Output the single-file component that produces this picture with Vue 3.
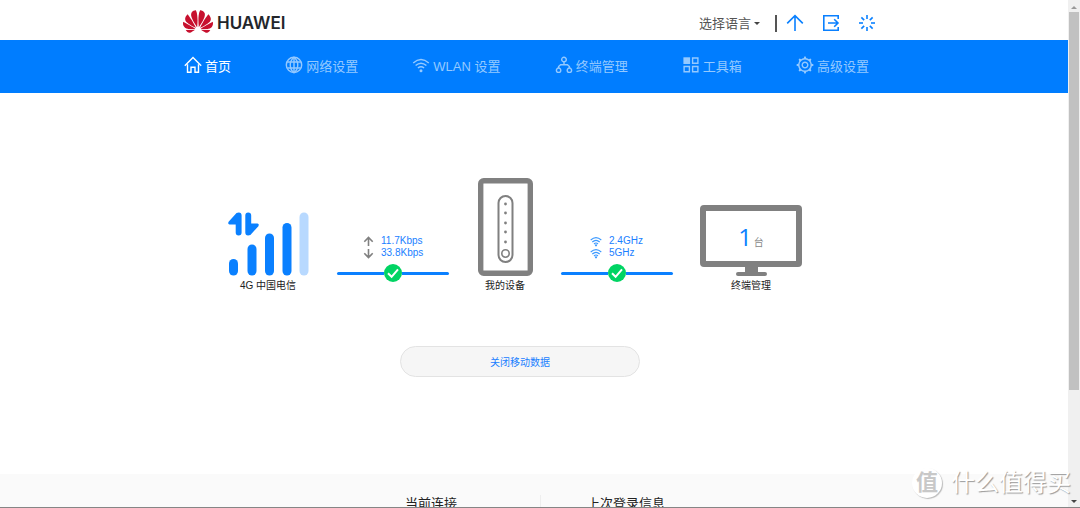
<script setup>
import { ref } from 'vue'

const language = ref('')

const navItems = [
  {
    label: '首页',
    active: true,
    paths: ['M.8 9.7L9 1.5L17.2 9.7', 'M3.5 8.2V16.3H7V11.2H11V16.3H14.5V8.2'],
  },
  {
    label: '网络设置',
    paths: [
      'M9 1.2a7.7 7.7 0 1 0 0 15.4a7.7 7.7 0 1 0 0-15.4z',
      'M9 1.2c-5 4-5 11.4 0 15.4c5-4 5-11.4 0-15.4z',
      'M2.2 6H15.8M2.2 12H15.8M9 1.2V16.6',
    ],
  },
  {
    label: 'WLAN 设置',
    paths: ['M1.2 7Q9 .2 16.8 7', 'M3.6 9.5Q9 4.8 14.4 9.5', 'M5.9 12Q9 9.4 12.1 12'],
    fills: ['M9 13.2a1.5 1.5 0 1 0 0 3a1.5 1.5 0 1 0 0-3z'],
  },
  {
    label: '终端管理',
    paths: [
      'M9 1.2a2.3 2.3 0 1 0 0 4.6a2.3 2.3 0 1 0 0-4.6z',
      'M3.6 12a2.2 2.2 0 1 0 0 4.4a2.2 2.2 0 1 0 0-4.4z',
      'M14.4 12a2.2 2.2 0 1 0 0 4.4a2.2 2.2 0 1 0 0-4.4z',
      'M9 6V8.8M3.6 12V10.6L5.6 8.8H12.4L14.4 10.6V12',
    ],
  },
  {
    label: '工具箱',
    paths: ['M10.6 2H15.9V7.3H10.6z', 'M2.1 10.5H7.4V15.8H2.1z', 'M10.6 10.5H15.9V15.8H10.6z'],
    fills: ['M1.4 1.3H8.1V8H1.4z'],
  },
  {
    label: '高级设置',
    paths: [
      'M9 2.8a6.2 6.2 0 1 0 0 12.4a6.2 6.2 0 1 0 0-12.4z',
      'M9 6.2a2.8 2.8 0 1 0 0 5.6a2.8 2.8 0 1 0 0-5.6z',
    ],
    fills: [
      'M7.5 3L8.3 .6H9.7L10.5 3zM7.5 15L8.3 17.4H9.7L10.5 15zM3 7.5L.6 8.3V9.7L3 10.5zM15 7.5L17.4 8.3V9.7L15 10.5zM3.6 5.7L2.6 3.6L3.6 2.6L5.7 3.6zM12.3 3.6L14.4 2.6L15.4 3.6L14.4 5.7zM3.6 12.3L2.6 14.4L3.6 15.4L5.7 14.4zM12.3 14.4L14.4 15.4L15.4 14.4L14.4 12.3z',
    ],
  },
]

const rays = [0, 45, 90, 135, 180, 225, 270, 315]
const lamps = [26, 35, 45, 54, 64]
const bands = ['2.4GHz', '5GHz']
const rates = [
  { value: '11.7Kbps', name: '上传', path: 'M5.5 10V2M1.3 5.7L5.5 1.5L9.7 5.7' },
  { value: '33.8Kbps', name: '下载', path: 'M5.5 1V9M1.3 5.3L5.5 9.5L9.7 5.3' },
]
</script>

<template>
  <div class="window">
    <div class="page">
      <header class="top">
        <div class="container top-row">
          <a class="brand" href="#">
            <svg class="flower" viewBox="0 2.9 24 18.2" aria-hidden="true">
              <path
                d="M3.67 6.14S1.82 7.91 1.72 9.78v.35c.08 1.51 1.22 2.4 1.22 2.4 1.83 1.79 6.26 4.04 7.3 4.55 0 0 .06.03.1-.01l.02-.04v-.04C7.52 10.8 3.67 6.14 3.67 6.14zM9.65 18.6c-.02-.08-.1-.08-.1-.08l-7.38.26c.8 1.43 2.15 2.53 3.56 2.2.96-.25 3.16-1.78 3.88-2.3.06-.05.04-.09.04-.09zm.08-.78C6.49 15.63.21 12.28.21 12.28c-.15.46-.2.9-.21 1.3v.07c0 1.07.4 1.82.4 1.82.8 1.69 2.34 2.2 2.34 2.2.7.3 1.4.31 1.4.31.12.02 4.4 0 5.54 0 .05 0 .08-.05.08-.05v-.06c0-.03-.03-.05-.03-.05zM9.06 3.19a3.42 3.42 0 00-2.57 3.15v.41c.03.6.16 1.05.16 1.05.66 2.9 3.86 7.65 4.55 8.65.05.05.1.03.1.03a.1.1 0 00.06-.1c1.06-10.6-1.11-13.42-1.11-13.42-.32.02-1.19.23-1.19.23zm8.299 2.27s-.49-1.8-2.44-2.28c0 0-.57-.14-1.17-.22 0 0-2.18 2.81-1.12 13.43.01.07.06.08.06.08.07.03.1-.03.1-.03.72-1.03 3.9-5.76 4.55-8.64 0 0 .36-1.4.02-2.34zm-2.92 13.07s-.07 0-.09.05c0 0-.01.07.03.1.7.51 2.85 2 3.88 2.3 0 0 .16.05.43.06h.14c.69-.02 1.9-.37 3-2.26l-7.4-.25zm7.83-8.41c.14-2.06-1.94-3.97-1.94-3.98 0 0-3.85 4.66-6.67 10.8 0 0-.03.08.02.13l.04.01h.06c1.06-.53 5.46-2.77 7.28-4.54 0 0 1.15-.93 1.21-2.42zm1.52 2.14s-6.28 3.37-9.52 5.55c0 0-.05.04-.03.11 0 0 .03.06.07.06 1.16 0 5.56 0 5.67-.02 0 0 .57-.02 1.27-.29 0 0 1.56-.5 2.37-2.27 0 0 .73-1.45.17-3.14z"
              />
            </svg>
            <span>HUAWEI</span>
          </a>
          <div class="tools">
            <label class="language">
              <select v-model="language" aria-label="选择语言">
                <option value="">选择语言</option>
              </select>
              <i class="caret"></i>
            </label>
            <i class="bar"></i>
            <button class="tool" type="button" aria-label="升级">
              <svg viewBox="0 0 18 18"><path d="M9 17V1.8M1.2 9.4L9 1.6L16.8 9.4" /></svg>
            </button>
            <button class="tool" type="button" aria-label="退出">
              <svg viewBox="0 0 18 18">
                <path d="M16.2 5V1.8H1.8V16.2H16.2V13M6 9H16M12.2 5.2L16 9L12.2 12.8" />
              </svg>
            </button>
            <button class="tool" type="button" aria-label="重启">
              <svg viewBox="0 0 18 18">
                <path v-for="r in rays" :key="r" d="M9 1V5" :transform="`rotate(${r} 9 9)`" />
              </svg>
            </button>
          </div>
        </div>
      </header>

      <nav class="nav">
        <div class="container nav-row">
          <a v-for="item in navItems" :key="item.label" href="#" :class="{ active: item.active }">
            <svg viewBox="0 0 18 18" aria-hidden="true">
              <path v-for="p in item.paths" :key="p" class="stroke" :d="p" />
              <path v-for="p in item.fills" :key="p" class="fill" :d="p" />
            </svg>
            <span>{{ item.label }}</span>
          </a>
        </div>
      </nav>

      <main class="container main">
        <section class="diagram">
          <div class="node">
            <svg class="signal" viewBox="0 0 81 64" aria-hidden="true">
              <rect x="1" y="47" width="9" height="16.5" rx="4.5" />
              <rect x="19.5" y="32.5" width="9" height="31" rx="4.5" />
              <rect x="37" y="21.5" width="9" height="42" rx="4.5" />
              <rect x="54.5" y="11" width="9" height="52.5" rx="4.5" />
              <rect class="off" x="71.5" y="0.5" width="9" height="63" rx="4.5" />
              <path
                d="M8.5.9Q13.6-.5 13.6 3.5V20.5Q13.6 23.5 10.6 23.500Q7.700 23.500 7.700 20.500V12.500H1.500Q-.5 12 .6 9.800z"
              />
              <path
                d="M17.3 3.5Q17.3.5 20.2.5Q23.2.5 23.2 3.5V11.500H29.500Q31.500 12 30.400 14.200L22.400 23.100Q17.300 24.500 17.300 20.500z"
              />
            </svg>
            <span class="caption">4G 中国电信</span>
          </div>

          <div class="link">
            <ul class="rates">
              <li v-for="rate in rates" :key="rate.name">
                <svg viewBox="0 0 11 11" role="img" :aria-label="rate.name"><path :d="rate.path" /></svg>
                <span>{{ rate.value }}</span>
              </li>
            </ul>
            <div class="wire">
              <svg viewBox="0 0 18 18"><circle cx="9" cy="9" r="9" /><path d="M4 9.3L7.6 12.8L14 5.4" /></svg>
            </div>
          </div>

          <div class="node">
            <svg class="router" viewBox="0 0 55 98" aria-hidden="true">
              <rect x="2.7" y="2.7" width="49.6" height="92.6" rx="3" stroke-width="5.4" />
              <rect x="20.5" y="18" width="14" height="66" rx="7" stroke-width="2" />
              <circle cx="27.5" cy="75.5" r="3.7" stroke-width="1.6" />
              <circle v-for="y in lamps" :key="y" class="lamp" cx="27.5" :cy="y" r="1.4" />
            </svg>
            <span class="caption">我的设备</span>
          </div>

          <div class="link">
            <ul class="bands">
              <li v-for="band in bands" :key="band">
                <svg viewBox="0 0 12 11" aria-hidden="true">
                  <path d="M.7 4Q6 -.7 11.3 4M2.3 6Q6 2.6 9.7 6M4 8Q6 6 8 8" />
                  <circle cx="6" cy="9.3" r="1.1" />
                </svg>
                <span>{{ band }}</span>
              </li>
            </ul>
            <div class="wire">
              <svg viewBox="0 0 18 18"><circle cx="9" cy="9" r="9" /><path d="M4 9.3L7.6 12.8L14 5.4" /></svg>
            </div>
          </div>

          <div class="node">
            <div class="monitor">
              <div class="screen"><strong>1</strong><small>台</small></div>
              <i class="neck"></i>
              <i class="foot"></i>
            </div>
            <span class="caption">终端管理</span>
          </div>
        </section>

        <button class="toggle" type="button">关闭移动数据</button>
      </main>

      <footer class="info">
        <div class="container info-row">
          <h2>当前连接</h2>
          <h2>上次登录信息</h2>
        </div>
      </footer>
    </div>

    <div class="scrollbar" aria-hidden="true">
      <i class="up"></i>
      <i class="thumb"></i>
      <i class="down"></i>
    </div>

    <div class="watermark">
      <b>值</b>
      <span>什么值得买</span>
    </div>
  </div>
</template>

<style>
body {
  margin: 0;
}
</style>

<style scoped>
* {
  box-sizing: border-box;
}
.window {
  position: relative;
  display: grid;
  grid-template-columns: minmax(0, 1fr) 12px;
  height: 100vh;
  overflow: hidden;
  border-bottom: 1px solid #858585;
  background: #fff;
  color: #333;
  font-family: "Liberation Sans", "Noto Sans CJK SC", sans-serif;
  font-size: 13px;
}
.page {
  min-height: 0;
  overflow: hidden;
}
.container {
  max-width: 702px;
  margin: 0 auto;
}
a {
  text-decoration: none;
}
svg {
  display: block;
  flex: none;
}

.top-row {
  display: flex;
  align-items: center;
  justify-content: space-between;
  height: 40px;
  padding: 6px 9px 0 0;
}
.brand {
  display: flex;
  align-items: center;
  gap: 4px;
  padding-bottom: 4px;
  color: #23262b;
  font: 600 17px/24px Inter, sans-serif;
}
.brand span {
  padding-top: 4px;
}
.flower {
  width: 30px;
  height: 23px;
  fill: #c7102e;
}
.tools {
  display: flex;
  align-items: center;
}
.language {
  display: flex;
  align-items: center;
  gap: 2px;
}
.language select {
  appearance: none;
  padding: 2px 0 0;
  border: 0;
  background: none;
  color: #555;
  font: inherit;
  line-height: 20px;
}
.caret {
  border: 3px solid transparent;
  border-top-color: #444;
  border-bottom: 0;
}
.bar {
  width: 2px;
  height: 17px;
  margin: 0 9px 0 15px;
  background: #555;
}
.tool {
  width: 18px;
  height: 18px;
  padding: 0;
  border: 0;
  background: none;
}
.tool + .tool {
  margin-left: 18px;
}
.tool svg {
  width: 18px;
  height: 18px;
  fill: none;
  stroke: #0a80ff;
  stroke-width: 1.6;
}

.nav {
  background: #007dff;
}
.nav-row {
  display: flex;
  justify-content: space-between;
  height: 53px;
  padding: 0 16px 3px 1px;
}
.nav a {
  display: flex;
  align-items: center;
  gap: 3px;
  color: #94c9ff;
  white-space: nowrap;
}
.nav a.active {
  color: #fff;
}
.nav svg {
  width: 18px;
  height: 18px;
}
.stroke {
  fill: none;
  stroke: currentColor;
  stroke-width: 1.4;
}
.fill {
  fill: currentColor;
}

.main {
  display: flex;
  flex-direction: column;
  align-items: center;
  height: 381px;
  padding: 85px 28px 0 0;
}
.diagram {
  display: grid;
  grid-template-columns: 138px 112px 112px 112px 156px;
  align-items: end;
  padding-right: 12px;
  font-size: 10px;
}
.node {
  display: flex;
  flex-direction: column;
  align-items: center;
}
.caption {
  color: #222;
  line-height: 16px;
  margin-top: 2px;
}
.signal {
  width: 81px;
  height: 64px;
  fill: #0a80ff;
}
.signal .off {
  fill: #b8d9ff;
}
.router {
  width: 55px;
  height: 98px;
  fill: none;
  stroke: #808080;
}
.router .lamp {
  fill: #808080;
  stroke: none;
}
.monitor {
  display: flex;
  flex-direction: column;
  align-items: center;
}
.screen {
  display: flex;
  align-items: baseline;
  justify-content: center;
  gap: 2px;
  width: 102px;
  height: 62px;
  padding-top: 10px;
  border: 6px solid #808080;
  border-radius: 4px;
}
.screen strong {
  color: #0a80ff;
  font-family: "Open Sans", sans-serif;
  font-weight: 400;
  font-size: 24px;
  line-height: 32px;
}
.screen small {
  color: #888;
  font-size: 10px;
}
.neck {
  width: 13px;
  height: 5px;
  background: #808080;
}
.foot {
  width: 31px;
  height: 4px;
  border-radius: 2px;
  background: #808080;
}

.link {
  padding-bottom: 12px;
}
.link ul {
  margin: 0 0 5px;
  padding: 0 0 0 26px;
  list-style: none;
  color: #1a80ff;
}
.link .bands {
  padding-left: 29px;
}
.link li {
  display: flex;
  align-items: center;
  gap: 7px;
  height: 12px;
  line-height: 12px;
}
.rates svg {
  width: 11px;
  height: 11px;
  fill: none;
  stroke: #808080;
  stroke-width: 1.6;
}
.bands svg {
  width: 12px;
  height: 11px;
  fill: none;
  stroke: #3c99ff;
  stroke-width: 1.1;
}
.bands circle {
  fill: #3c99ff;
  stroke: none;
}
.wire {
  display: flex;
  align-items: center;
}
.wire::before,
.wire::after {
  content: "";
  flex: 1;
  height: 3px;
  border-radius: 2px 0 0 2px;
  background: #0a80ff;
}
.wire::after {
  border-radius: 0 2px 2px 0;
}
.wire svg {
  width: 18px;
  height: 18px;
}
.wire circle {
  fill: #00d463;
}
.wire path {
  fill: none;
  stroke: #fff;
  stroke-width: 2;
}

.toggle {
  width: 240px;
  height: 31px;
  margin-top: 52px;
  padding: 0;
  border: 1px solid #e3e3e3;
  border-radius: 16px;
  background: #f6f6f6;
  color: #1a80ff;
  font: inherit;
  font-size: 10px;
}

.info {
  padding-top: 21px;
  background: #fafafa;
}
.info-row {
  display: grid;
  grid-template-columns: 358px 1fr;
  height: 100px;
}
.info h2 {
  margin: 0;
  font-weight: 400;
  font-size: 13px;
  line-height: 18px;
  color: #222;
}
.info h2:first-child {
  padding-right: 83px;
  border-right: 1px solid #eee;
  text-align: right;
}
.info h2:last-child {
  padding-left: 46px;
}

.scrollbar {
  display: flex;
  flex-direction: column;
  align-items: center;
  justify-content: space-between;
  padding: 6px 1px 4px;
  background: #f0f0f0;
}
.up,
.down {
  border: 3px solid transparent;
  border-top: 0;
  border-bottom-color: #999;
}
.down {
  border-top: 3px solid #444;
  border-bottom: 0;
}
.thumb {
  width: 10px;
  height: 76%;
  margin: 3px 0 auto;
  background: #c1c1c1;
}

.watermark {
  position: absolute;
  right: 9px;
  bottom: 8px;
  display: flex;
  align-items: center;
  gap: 9px;
  color: #fff;
  font-size: 24px;
  line-height: 32px;
  text-shadow: 1px 1px 1px #999;
}
.watermark b {
  width: 30px;
  height: 30px;
  border-radius: 50%;
  background: #fff;
  box-shadow: 1px 1px 1px #bbb;
  color: #c8c8c8;
  font-size: 22px;
  line-height: 29px;
  text-align: center;
  text-shadow: none;
}
</style>
